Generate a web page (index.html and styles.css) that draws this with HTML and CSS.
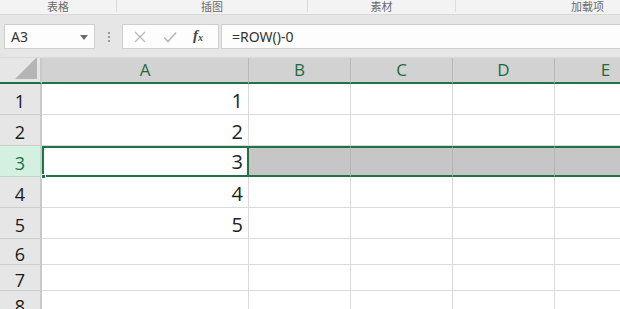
FILE: index.html
```html
<!DOCTYPE html>
<html>
<head>
<meta charset="utf-8">
<link rel="stylesheet" href="styles.css">
</head>
<body>
<div class="ribbon-labels">
  <div class="grp g1">表格</div>
  <div class="grp g2">插图</div>
  <div class="grp g3">素材</div>
  <div class="grp g4">加载项</div>
</div>
<div class="fbar">
  <div class="namebox">
    <span>A3</span>
    <svg class="caret" width="8" height="5" viewBox="0 0 8 5"><path d="M0 0H8L4 5Z" fill="#6b6b6b"/></svg>
  </div>
  <div class="dots"><i></i><i></i><i></i></div>
  <div class="fxgroup">
    <svg class="ico" width="12" height="12" viewBox="0 0 12 12"><path d="M1 1L11 11M11 1L1 11" stroke="#b8b8b8" stroke-width="1.3" fill="none"/></svg>
    <svg class="ico" width="14" height="12" viewBox="0 0 14 12"><path d="M1 6.5L5 10.5L13 1.5" stroke="#b8b8b8" stroke-width="1.6" fill="none"/></svg>
    <span class="fx"><i>f</i><sub>x</sub></span>
  </div>
  <div class="formula">=ROW()-0</div>
</div>
<div class="sheet">
  <div class="corner"><svg width="22" height="22" viewBox="0 0 22 22"><path d="M22 0V22H0Z" fill="#b5b5b5"/></svg></div>
  <div class="ch">A</div><div class="ch">B</div><div class="ch">C</div><div class="ch">D</div><div class="ch">E</div>

  <div class="rh tall">1</div><div class="c tall num">1</div><div class="c tall"></div><div class="c tall"></div><div class="c tall"></div><div class="c tall"></div>
  <div class="rh tall">2</div><div class="c tall num">2</div><div class="c tall"></div><div class="c tall"></div><div class="c tall"></div><div class="c tall"></div>
  <div class="rh tall sel">3</div><div class="c tall num active">3<span class="handle"></span></div><div class="c tall hl"></div><div class="c tall hl"></div><div class="c tall hl"></div><div class="c tall hl"></div>
  <div class="rh tall">4</div><div class="c tall num">4</div><div class="c tall"></div><div class="c tall"></div><div class="c tall"></div><div class="c tall"></div>
  <div class="rh tall">5</div><div class="c tall num">5</div><div class="c tall"></div><div class="c tall"></div><div class="c tall"></div><div class="c tall"></div>
  <div class="rh">6</div><div class="c"></div><div class="c"></div><div class="c"></div><div class="c"></div><div class="c"></div>
  <div class="rh">7</div><div class="c"></div><div class="c"></div><div class="c"></div><div class="c"></div><div class="c"></div>
  <div class="rh">8</div><div class="c"></div><div class="c"></div><div class="c"></div><div class="c"></div><div class="c"></div>
</div>
</body>
</html>
```
FILE: styles.css
```css
* { box-sizing: border-box; }
html, body { margin: 0; padding: 0; }
body {
  width: 620px; height: 309px; overflow: hidden;
  background: #e6e6e6;
  font-family: "Noto Sans", "Noto Sans CJK SC", sans-serif;
}
.ribbon-labels {
  display: grid;
  grid-template-columns: 117px 191px 148px 1fr;
  height: 15px;
  background: #f3f3f3;
  border-bottom: 1px solid #d9d9d9;
}
.grp {
  font-size: 11px; color: #6b6b6b;
  text-align: center; line-height: 14px;
  border-right: 1px solid #dcdcdc;
  height: 12px;
}
.g4 { border-right: none; text-align: right; padding-right: 16px; }
.fbar {
  height: 42px;
  display: flex; align-items: flex-start;
  padding-top: 9px;
  background: #e6e6e6;
}
.namebox {
  margin-left: 4px;
  width: 91px; height: 25px;
  background: #fdfdfd;
  border: 1px solid #cfcfcf;
  display: flex; align-items: center; justify-content: space-between;
  padding: 0 6px 0 6px;
  font-size: 14px; color: #333;
}
.caret { margin-top: 1px; }
.dots {
  width: 27px; height: 25px;
  display: flex; flex-direction: column; align-items: center; justify-content: center; gap: 2px;
}
.dots i { width: 2px; height: 2px; background: #9a9a9a; display: block; }
.fxgroup {
  width: 97px; height: 25px;
  background: #fdfdfd;
  border: 1px solid #cfcfcf;
  display: flex; align-items: center;
  padding-left: 11px;
  gap: 17px;
}
.fx { font-family: "Liberation Serif", serif; font-size: 15px; font-weight: bold; color: #444; margin-left: -1px; line-height: 15px; }
.fx i { font-style: italic; }
.fx sub { font-size: 10px; font-style: italic; vertical-align: -1px; }
.formula {
  margin-left: 2px;
  flex: 1; height: 25px;
  background: #fdfdfd;
  border: 1px solid #cfcfcf;
  border-right: none;
  font-size: 14px; color: #333;
  line-height: 23px;
  padding-left: 10px;
}
.sheet {
  display: grid;
  grid-template-columns: 42px 207px 102px 102px 102px 102px;
  grid-template-rows: 26px repeat(5, 31px) repeat(3, 26px);
  border-top: 1px solid #dadada;
  background: #fff;
  font-family: "Open Sans", sans-serif;
  width: 620px;
  overflow: hidden;
}
.corner {
  background: #e6e6e6;
  border-right: 2px solid #c9c9c9;
  border-bottom: 2px solid #217346;
  display: flex; align-items: flex-end; justify-content: flex-end;
  padding: 0 3px 3px 0;
}
.ch {
  background: #d2d2d2;
  border-right: 1px solid #b9b9b9;
  border-bottom: 2px solid #217346;
  color: #1e6b3f;
  font-size: 17px;
  text-align: center;
  line-height: 23px;
}
.rh {
  background: #e6e6e6;
  border-right: 2px solid #c9c9c9;
  border-bottom: 1px solid #cbcbcb;
  color: #1a1a1a;
  font-size: 18px;
  text-align: center;
  line-height: 30px;
}
.rh.tall { line-height: 34px; }
.rh.sel { background: #d3f0e0; color: #217346; border-bottom: 1px solid #b9d9c6; border-right: 2px solid #b9d9c6; }
.c {
  border-right: 1px solid #dadada;
  border-bottom: 1px solid #dadada;
  position: relative;
}
.num {
  font-size: 20px; color: #222;
  text-align: right;
  padding-right: 5px;
  line-height: 33px;
}
.hl {
  background: #c6c6c6;
  border-top: 2px solid #217346;
  border-bottom: 2px solid #217346;
  border-right: 1px solid #b5b5b5;
}
.active {
  border: 2px solid #217346;
  line-height: 27px;
  padding-right: 4px;
}
.handle {
  position: absolute;
  left: -3px; bottom: -4px;
  width: 5px; height: 5px;
  background: #217346;
  border: 1px solid #fff;
}
```
